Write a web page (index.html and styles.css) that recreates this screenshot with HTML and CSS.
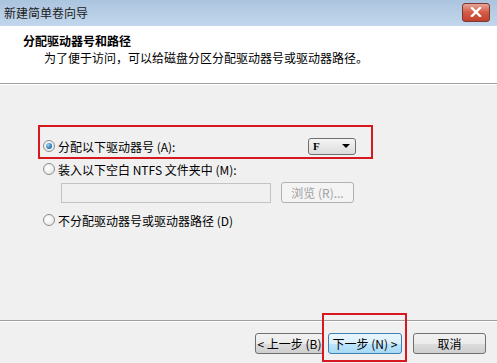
FILE: index.html
```html
<!DOCTYPE html>
<html lang="zh-CN">
<head>
    <meta charset="UTF-8">
    <title>新建简单卷向导</title>
    <link rel="stylesheet" href="styles.css">
</head>
<body>
<div class="wizard">

    <!-- Title bar -->
    <div class="titlebar">
        <span class="title-text">新建简单卷向导</span>
        <span class="close-btn">
            <svg width="14" height="10" viewBox="0 0 14 10">
                <path d="M3 1 L11 9 M11 1 L3 9" stroke="#fff" stroke-width="2.4" stroke-linecap="square"/>
            </svg>
        </span>
    </div>

    <!-- Header -->
    <div class="header">
        <div class="header-title">分配驱动器号和路径</div>
        <div class="header-sub">为了便于访问，可以给磁盘分区分配驱动器号或驱动器路径。</div>
    </div>

    <!-- Options -->
    <div class="content">
        <div class="option highlight">
            <span class="radio checked"></span>
            <span class="label">分配以下驱动器号 (A):</span>
            <span class="combo">F<span class="arrow"></span></span>
        </div>
        <div class="option">
            <span class="radio"></span>
            <span class="label">装入以下空白 NTFS 文件夹中 (M):</span>
        </div>
        <div class="folder-row">
            <span class="textbox"></span>
            <span class="btn browse">浏览 (R)...</span>
        </div>
        <div class="option third">
            <span class="radio"></span>
            <span class="label">不分配驱动器号或驱动器路径 (D)</span>
        </div>
    </div>

    <!-- Footer -->
    <div class="footer">
        <span class="btn nav prev">&lt; 上一步 (B)</span>
        <span class="next-wrap"><span class="btn nav focused">下一步 (N) &gt;</span></span>
        <span class="btn nav cancel">取消</span>
    </div>

</div>
</body>
</html>
```

FILE: styles.css
```css
body {
    margin: 0;
    font-family: "Noto Sans CJK SC", "DejaVu Sans", sans-serif;
    font-size: 12px;
    color: #000;
    background-color: #f0f0f0;
}
.wizard {
    width: 497px;
    height: 363px;
    overflow: hidden;
    display: flex;
    flex-direction: column;
}
.titlebar {
    height: 26px;
    background: linear-gradient(#abc4de, #c2d7ec);
    display: flex;
    align-items: center;
    justify-content: space-between;
    padding: 0 7px 0 4px;
    flex-shrink: 0;
}
.title-text {
    font-size: 12px;
    color: #1a1a1a;
    line-height: 26px;
}
.close-btn {
    width: 26px;
    height: 17px;
    border: 1px solid #7a3a32;
    border-radius: 3px;
    background: linear-gradient(#e8a598, #d45b46 50%, #c3402b);
    display: flex;
    align-items: center;
    justify-content: center;
    margin-top: -2px;
}
.header {
    height: 57px;
    background-color: #fff;
    border-bottom: 1px solid #a0a0a0;
    flex-shrink: 0;
}
.header-title {
    font-weight: bold;
    margin: 8px 0 0 23px;
    line-height: 14px;
}
.header-sub {
    margin: 3px 0 0 44px;
    line-height: 14px;
}
.content {
    height: 236px;
    flex-shrink: 0;
    padding: 40px 0 0 38px;
    box-sizing: border-box;
    border-top: 1px solid #fff;
}
.option {
    display: flex;
    align-items: center;
    height: 20px;
    padding-left: 5px;
    width: 335px;
    box-sizing: border-box;
}
.option.highlight {
    height: 34px;
    border: 2px solid #d7191f;
    padding: 8px 0 0 3px;
}
.option.third {
    margin-top: 7px;
}
.radio {
    width: 12px;
    height: 12px;
    box-sizing: border-box;
    border-radius: 50%;
    border: 1px solid #8d8d8d;
    background: radial-gradient(circle at 40% 40%, #fff, #e2e2e2);
    margin-right: 3px;
    position: relative;
    flex-shrink: 0;
}
.radio.checked::after {
    content: "";
    position: absolute;
    left: 2px;
    top: 2px;
    width: 6px;
    height: 6px;
    border-radius: 50%;
    background: radial-gradient(circle at 35% 35%, #9fd8f5, #1a6fa6 70%);
}
.label {
    white-space: nowrap;
}
.combo {
    margin-left: auto;
    margin-right: 15px;
    width: 48px;
    height: 17px;
    border: 1px solid #707070;
    border-radius: 3px;
    background: linear-gradient(#f4f4f4, #dcdcdc);
    display: flex;
    align-items: center;
    padding-left: 4px;
    font-family: "Liberation Serif", serif;
    font-weight: bold;
    font-size: 11px;
    box-sizing: border-box;
}
.arrow {
    margin-left: auto;
    margin-right: 5px;
    width: 0;
    height: 0;
    border-left: 4px solid transparent;
    border-right: 4px solid transparent;
    border-top: 4px solid #000;
}
.folder-row {
    display: flex;
    align-items: center;
    gap: 10px;
    margin: 3px 0 0 23px;
}
.textbox {
    width: 210px;
    height: 20px;
    flex-shrink: 0;
    border: 1px solid #c3c3c3;
    background-color: #f0f0f0;
    box-sizing: border-box;
}
.btn {
    display: inline-flex;
    align-items: center;
    justify-content: center;
    height: 21px;
    border: 1px solid #707070;
    border-radius: 3px;
    background: linear-gradient(#f2f2f2 0%, #ebebeb 50%, #dddddd 51%, #cfcfcf 100%);
    box-sizing: border-box;
    white-space: nowrap;
    flex-shrink: 0;
}
.browse {
    width: 73px;
    color: #a0a0a0;
    border-color: #adb2b5;
    background: #f4f4f4;
}
.footer {
    flex: 1;
    border-top: 1px solid #a0a0a0;
    box-shadow: inset 0 1px 0 #fff;
    display: flex;
    align-items: flex-start;
    padding: 0 0 0 255px;
}
.nav {
    margin-top: 12px;
}
.prev {
    width: 69px;
}
.next-wrap {
    width: 85px;
    height: 49px;
    flex-shrink: 0;
    border: 2px solid #d7191f;
    box-sizing: border-box;
    margin: -8px 0 0 -2px;
    display: flex;
    padding-left: 4px;
}
.next-wrap .nav {
    width: 74px;
    margin-top: 18px;
}
.focused {
    border-color: #3c7fb1;
    background: linear-gradient(#eaf6fd 0%, #d9f0fc 50%, #bee6fd 51%, #a7d9f5 100%);
}
.cancel {
    width: 73px;
    margin-left: 6px;
}
```
